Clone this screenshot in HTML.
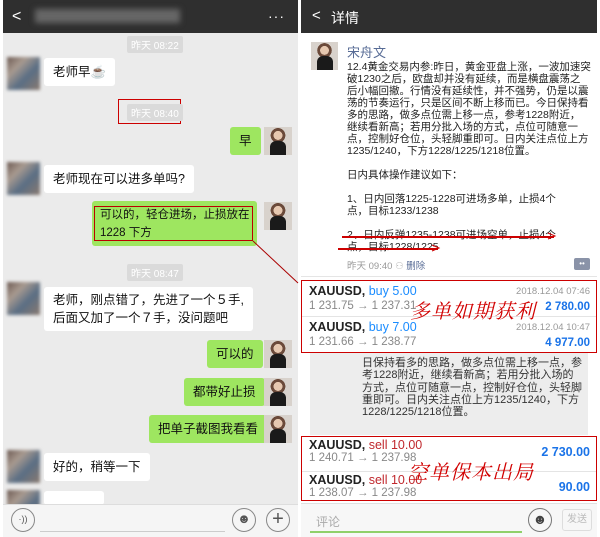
<!DOCTYPE html>
<html><head><meta charset="utf-8"><style>
*{margin:0;padding:0;box-sizing:border-box}
body{width:600px;height:537px;background:#fff;position:relative;overflow:hidden;font-family:"Liberation Sans","Noto Sans CJK SC",sans-serif}
.a{position:absolute;white-space:nowrap}
.hdr{background:#2f2f2f;height:33px;top:0}
.ts{background:#dadada;color:#fff;font-size:10px;padding:1px 4px;border-radius:2px}
.bl{background:#fff;border-radius:3px;font-size:12.5px;color:#111;padding:0 9px;line-height:28px}
.bg{background:#9ee660;border-radius:3px;font-size:12.5px;color:#111;padding:0 9px;line-height:28px}
.av1{width:33px;height:33px;background:linear-gradient(135deg,#6d5a52 0,#a89a90 30%,#5a6e84 60%,#8a7a70 100%);filter:blur(1.5px)}
.av2{width:28px;height:28px;background:radial-gradient(circle at 50% 30%,#e6c8b0 0 18%,#6b4a3a 19% 30%,#d8d2cc 31%),#ddd;overflow:hidden}
.av2:after{content:"";position:absolute;left:6px;top:14px;width:16px;height:14px;background:#1a1a1a;border-radius:6px 6px 0 0}
.rt{font-size:10.5px;color:#222;line-height:12px}
.tr{position:absolute;left:0;right:0;height:36px;border-bottom:1px solid #e4e4e4}
.sym{font-size:12.5px;font-weight:bold;color:#222;position:absolute;left:7px;top:3px}
.px{font-size:11.5px;color:#888;position:absolute;left:7px;top:19px}
.dt{font-size:9.5px;color:#999;position:absolute;right:6px;top:5px}
.pr{font-size:11.5px;color:#1a73e8;font-weight:bold;position:absolute;right:6px;top:20px}
.hand{font-family:"Noto Serif CJK SC",serif;color:#d10000;font-size:20px;letter-spacing:1px;font-style:italic}
</style></head><body>
<div class="a" style="left:3px;top:0;width:295px;height:537px;background:#ebebeb"></div>
<div class="a hdr" style="left:3px;width:295px"></div>
<div class="a" style="left:12px;top:8px;color:#fff;font-size:16px">&lt;</div>
<div class="a" style="left:35px;top:9px;width:145px;height:14px;background:#666;filter:blur(3px)"></div>
<div class="a" style="left:268px;top:8px;color:#fff;font-size:14px;letter-spacing:1px">···</div>
<div class="a ts" style="left:127px;top:36px">昨天 08:22</div>
<div class="a av1" style="left:7px;top:57px"></div>
<div class="a bl" style="left:44px;top:58px">老师早☕</div>
<div class="a" style="left:118px;top:99px;width:63px;height:25px;border:1.5px solid #c00"></div>
<div class="a ts" style="left:127px;top:104px">昨天 08:40</div>
<div class="a bg" style="left:230px;top:127px">早</div>
<div class="a av2" style="left:264px;top:127px"></div>
<div class="a av1" style="left:7px;top:162px"></div>
<div class="a bl" style="left:44px;top:165px">老师现在可以进多单吗?</div>
<div class="a bg" style="left:92px;top:201px;width:165px;height:45px;line-height:18px;padding:5px 6px 5px 8px;font-size:11.5px">可以的，轻仓进场，止损放在<br>1228 下方</div>
<div class="a" style="left:94px;top:206px;width:159px;height:35px;border:1.5px solid #b00"></div>
<div class="a av2" style="left:264px;top:202px"></div>
<div class="a ts" style="left:127px;top:264px">昨天 08:47</div>
<div class="a av1" style="left:7px;top:282px"></div>
<div class="a bl" style="left:44px;top:287px;line-height:18px;padding:4px 9px">老师，刚点错了，先进了一个５手,<br>后面又加了一个７手，没问题吧</div>
<div class="a bg" style="left:207px;top:340px">可以的</div>
<div class="a av2" style="left:264px;top:340px"></div>
<div class="a bg" style="left:184px;top:378px">都带好止损</div>
<div class="a av2" style="left:264px;top:378px"></div>
<div class="a bg" style="left:149px;top:415px">把单子截图我看看</div>
<div class="a av2" style="left:264px;top:415px"></div>
<div class="a av1" style="left:7px;top:450px"></div>
<div class="a bl" style="left:44px;top:453px">好的，稍等一下</div>
<div class="a av1" style="left:7px;top:490px"></div>
<div class="a bl" style="left:44px;top:491px;width:60px;height:14px"></div>
<div class="a" style="left:3px;top:504px;width:295px;height:33px;background:#f5f5f5;border-top:1px solid #ddd"></div>
<div class="a" style="left:11px;top:508px;width:24px;height:24px;border:1.5px solid #888;border-radius:50%;font-size:9px;text-align:center;line-height:21px;color:#555">·))</div>
<div class="a" style="left:40px;top:531px;width:185px;height:1px;background:#ccc"></div>
<div class="a" style="left:232px;top:508px;width:24px;height:24px;border:1.5px solid #888;border-radius:50%;text-align:center;font-size:13px;line-height:20px;color:#555">☻</div>
<div class="a" style="left:266px;top:508px;width:24px;height:24px;border:1.5px solid #888;border-radius:50%;text-align:center;font-size:20px;line-height:20px;color:#555">+</div>
<div class="a hdr" style="left:301px;width:296px"></div>
<div class="a" style="left:312px;top:7px;color:#fff;font-size:15px">&lt;</div>
<div class="a" style="left:331px;top:8px;color:#fff;font-size:14px">详情</div>
<div class="a av2" style="left:311px;top:42px;width:27px;height:28px"></div>
<div class="a" style="left:347px;top:42px;color:#576b95;font-size:13px">宋舟文</div>
<div class="a rt" style="left:347px;top:61px">12.4黄金交易内参:昨日，黄金亚盘上涨，一波加速突<br>破1230之后，欧盘却并没有延续，而是横盘震荡之<br>后小幅回撤。行情没有延续性，并不强势，仍是以震<br>荡的节奏运行，只是区间不断上移而已。今日保持看<br>多的思路，做多点位需上移一点，参考1228附近，<br>继续看新高；若用分批入场的方式，点位可随意一<br>点，控制好仓位，头轻脚重即可。日内关注点位上方<br>1235/1240，下方1228/1225/1218位置。<br><br>日内具体操作建议如下：<br><br>1、日内回落1225-1228可进场多单，止损4个<br>点，目标1233/1238<br><br>2、日内反弹1235-1238可进场空单，止损4个<br>点，目标1228/1225</div>
<div class="a" style="left:342px;top:236px;width:212px;height:1.5px;background:#c00"></div>
<div class="a" style="left:338px;top:248px;width:100px;height:1.5px;background:#c00"></div>
<div class="a" style="left:347px;top:258px;font-size:9.5px;color:#999">昨天 09:40 <span style="color:#bbb">⚇</span> <span style="color:#576b95">删除</span></div>
<div class="a" style="left:574px;top:258px;width:16px;height:12px;background:#8a93a8;border-radius:2px;color:#fff;font-size:8px;text-align:center;line-height:11px">••</div>
<div class="a" style="left:301px;top:276px;width:296px;height:1px;background:#e5e5e5"></div>
<div class="a" style="left:301px;top:280px;width:296px;height:73px;border:1.5px solid #c00;background:#fff">
 <div class="tr" style="top:0"><span class="sym">XAUUSD, <span style="color:#1a8cff;font-weight:normal">buy 5.00</span></span><span class="px">1 231.75 → 1 237.31</span><span class="dt">2018.12.04 07:46</span><span class="pr">2 780.00</span></div>
 <div class="tr" style="top:36px;border:0"><span class="sym">XAUUSD, <span style="color:#1a8cff;font-weight:normal">buy 7.00</span></span><span class="px">1 231.66 → 1 238.77</span><span class="dt">2018.12.04 10:47</span><span class="pr">4 977.00</span></div>
</div>
<div class="a hand" style="left:410px;top:295px">多单如期获利</div>
<div class="a" style="left:310px;top:353px;width:278px;height:82px;background:#ededed"></div>
<div class="a" style="left:362px;top:357px;font-size:11px;line-height:12.3px;color:#333">日保持看多的思路，做多点位需上移一点，参<br>考1228附近，继续看新高；若用分批入场的<br>方式，点位可随意一点，控制好仓位，头轻脚<br>重即可。日内关注点位上方1235/1240，下方<br>1228/1225/1218位置。</div>
<div class="a" style="left:301px;top:436px;width:296px;height:65px;border:1.5px solid #c00;background:#fff">
 <div class="tr" style="top:0;height:35px"><span class="sym" style="top:1px">XAUUSD, <span style="color:#c0282d;font-weight:normal">sell 10.00</span></span><span class="px" style="top:15px">1 240.71 → 1 237.98</span><span class="pr" style="top:8px;font-size:12.5px">2 730.00</span></div>
 <div class="tr" style="top:35px;height:28px;border:0"><span class="sym" style="top:1px">XAUUSD, <span style="color:#c0282d;font-weight:normal">sell 10.00</span></span><span class="px" style="top:15px">1 238.07 → 1 237.98</span><span class="pr" style="top:8px;font-size:12.5px">90.00</span></div>
</div>
<div class="a hand" style="left:408px;top:456px">空单保本出局</div>
<div class="a" style="left:301px;top:503px;width:296px;height:34px;background:#f7f7f7;border-top:1px solid #e0e0e0"></div>
<div class="a" style="left:316px;top:513px;font-size:12px;color:#aaa">评论</div>
<div class="a" style="left:310px;top:531px;width:212px;height:1.5px;background:#8fd06a"></div>
<div class="a" style="left:528px;top:508px;width:24px;height:24px;border:1.5px solid #777;border-radius:50%;text-align:center;font-size:14px;line-height:20px;color:#444">☻</div>
<div class="a" style="left:562px;top:509px;width:30px;height:22px;border:1px solid #ddd;border-radius:3px;font-size:10px;color:#bbb;text-align:center;line-height:20px">发送</div>
<svg class="a" style="left:0;top:0" width="600" height="537"><line x1="253" y1="241" x2="298" y2="283" stroke="#a00" stroke-width="1"/><path d="M548 233 L555 236 L548 239" fill="none" stroke="#c00" stroke-width="1"/><path d="M432 245 L439 248 L432 251" fill="none" stroke="#c00" stroke-width="1"/></svg>
</body></html>
